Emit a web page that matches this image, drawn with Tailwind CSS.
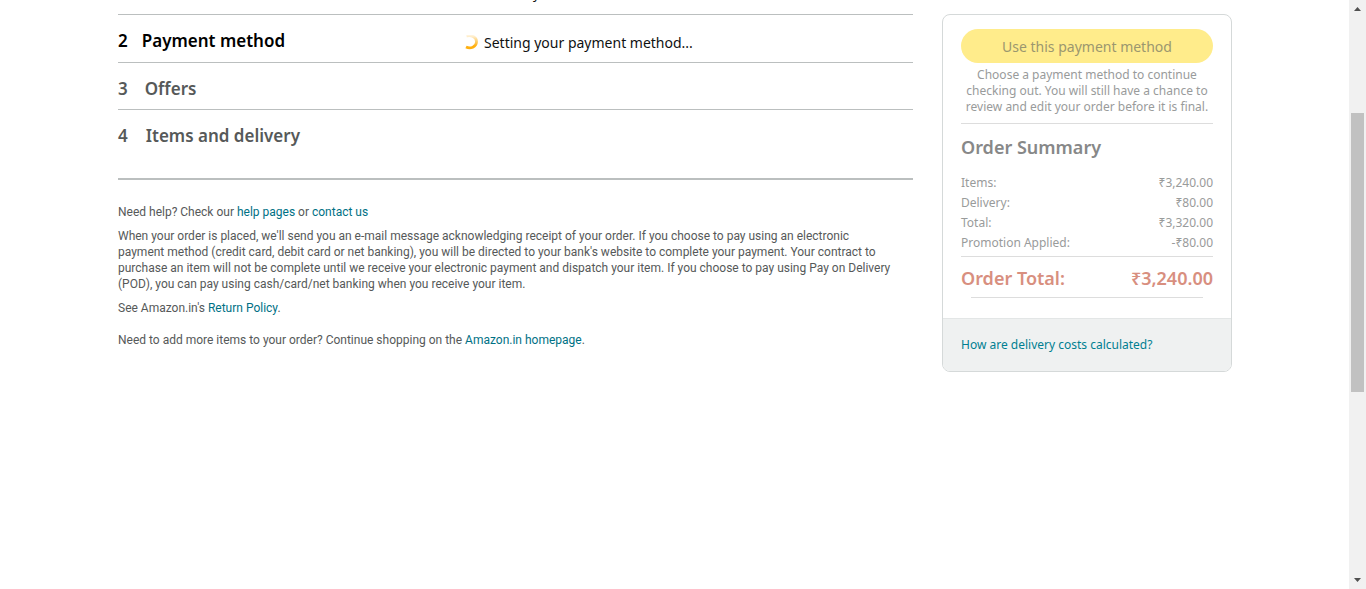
<!DOCTYPE html>
<html lang="en">
<head>
<meta charset="utf-8">
<meta name="viewport" content="width=device-width, initial-scale=1">
<title>Checkout</title>
<script src="https://cdn.jsdelivr.net/npm/@tailwindcss/browser@4"></script>
</head>
<body class="flex h-screen overflow-hidden bg-white font-['Noto_Sans','Open_Sans',sans-serif] text-[#0f1111]">
<div class="min-w-0 flex-1 overflow-hidden">
  <div class="mx-auto flex max-w-[1151px] items-start gap-[29px] pr-[18px] pl-[19px]">
    <main class="min-w-0 flex-1">
      <section class="flex h-[15px] items-end overflow-hidden border-b border-[#bbbfbf] pl-[346px] text-[13px]">
        <p class="pb-[10px] leading-5">Add delivery instructions</p>
      </section>
      <section class="flex h-12 items-center border-b border-[#bbbfbf] pt-1">
        <h2 class="flex w-[346px] gap-[14px] text-[17px] leading-6 font-semibold text-black"><span>2</span><span>Payment method</span></h2>
        <p class="flex items-center gap-[5px] pt-1 text-sm leading-5">
          <svg class="size-[15px]" viewBox="0 0 15 15" fill="none" aria-hidden="true">
            <defs><linearGradient id="spin" x1="0" y1="0" x2="0" y2="1"><stop offset="0" stop-color="#ffb010" stop-opacity=".15"/><stop offset=".85" stop-color="#ffb010"/></linearGradient></defs>
            <path d="M2.500 1C8-.3 12.700 2.500 12.500 7C12.200 12 6.500 14.200 2 12" stroke="url(#spin)" stroke-width="2.800"/>
          </svg>
          Setting your payment method...
        </p>
      </section>
      <section class="flex h-[47px] items-center border-b border-[#bbbfbf] pt-[6px]">
        <h2 class="flex gap-[17px] text-[17px] leading-6 font-semibold text-[#565959]"><span>3</span><span>Offers</span></h2>
      </section>
      <section class="h-[70px] border-b-2 border-[#bbbfbf] pt-[14px]">
        <h2 class="flex gap-[18px] text-[17px] leading-6 font-semibold text-[#565959]"><span>4</span><span>Items and delivery</span></h2>
      </section>
      <footer class="pt-6 font-[Roboto,sans-serif] text-xs leading-4 text-[#565959]">
        <p>Need help? Check our <a href="#" class="text-[#007185]">help pages</a> or <a href="#" class="text-[#007185]">contact us</a></p>
        <p class="mt-2">When your order is placed, we'll send you an e-mail message acknowledging receipt of your order. If you choose to pay using an electronic<br>payment method (credit card, debit card or net banking), you will be directed to your bank's website to complete your payment. Your contract to<br>purchase an item will not be complete until we receive your electronic payment and dispatch your item. If you choose to pay using Pay on Delivery<br>(POD), you can pay using cash/card/net banking when you receive your item.</p>
        <p class="mt-2">See Amazon.in's <a href="#" class="text-[#007185]">Return Policy</a>.</p>
        <p class="mt-4">Need to add more items to your order? Continue shopping on the <a href="#" class="text-[#007185]">Amazon.in homepage</a>.</p>
      </footer>
    </main>
    <aside class="mt-[14px] w-[290px] shrink-0 overflow-hidden rounded-lg border border-[#d5d9d9] text-xs text-[#999b9b]">
      <div class="px-[18px] pt-[14px] pb-5">
        <button type="button" disabled class="h-[34px] w-full rounded-full bg-[#ffec8b] pt-[2px] text-sm text-[#9b976f]">Use this payment method</button>
        <p class="pt-1 text-center leading-4">Choose a payment method to continue<br>checking out. You will still have a chance to<br>review and edit your order before it is final.</p>
        <hr class="mt-2 border-[#dddddd]">
        <h3 class="mt-[11px] text-lg leading-6 font-semibold text-[#878888]">Order Summary</h3>
        <table class="mt-[14px] w-full leading-5">
          <tbody>
            <tr><th scope="row" class="text-left font-normal">Items:</th><td class="text-right">₹3,240.00</td></tr>
            <tr><th scope="row" class="text-left font-normal">Delivery:</th><td class="text-right">₹80.00</td></tr>
            <tr><th scope="row" class="text-left font-normal">Total:</th><td class="text-right">₹3,320.00</td></tr>
            <tr><th scope="row" class="text-left font-normal">Promotion Applied:</th><td class="text-right">-₹80.00</td></tr>
          </tbody>
        </table>
        <hr class="mt-[3px] border-[#dddddd]">
        <p class="flex justify-between pt-[9px] text-lg leading-6 font-semibold text-[#d88f7f]"><span>Order Total:</span><span>₹3,240.00</span></p>
        <hr class="mx-[10px] mt-[7px] border-[#dddddd]">
      </div>
      <div class="border-t border-[#e3e6e6] bg-[#eff1f1] px-[18px] py-[18px] leading-4">
        <a href="#" class="text-[#007f91]">How are delivery costs calculated?</a>
      </div>
    </aside>
  </div>
</div>
<div class="flex w-[17px] shrink-0 flex-col items-center bg-[#f1f1f1]" aria-hidden="true">
  <svg class="h-[17px] w-[17px] shrink-0" viewBox="0 0 17 17"><path d="M5 11L8.500 7L12 11Z" fill="#505050"/></svg>
  <div class="flex w-full flex-1 flex-col items-center">
    <div class="grow-[96]"></div>
    <div class="w-[13px] grow-[279] bg-[#c1c1c1]"></div>
    <div class="grow-[180]"></div>
  </div>
  <svg class="h-[17px] w-[17px] shrink-0" viewBox="0 0 17 17"><path d="M5 6L8.500 10L12 6Z" fill="#505050"/></svg>
</div>
</body>
</html>
